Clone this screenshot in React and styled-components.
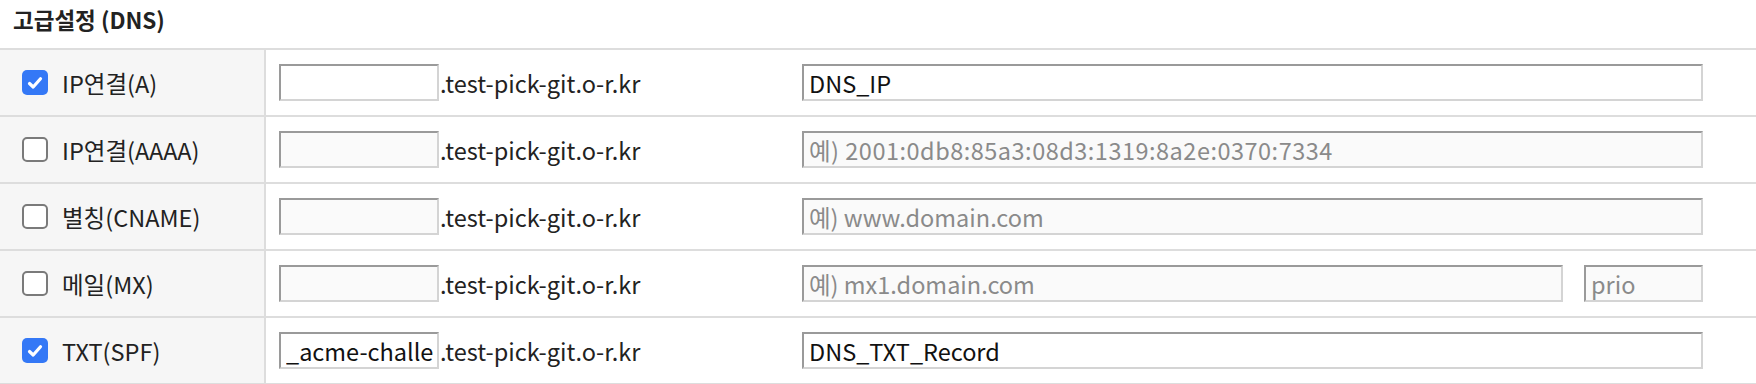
import React from "react"
import styled, { createGlobalStyle } from "styled-components"

const GlobalStyle = createGlobalStyle`
  html, body {
    margin: 0;
    padding: 0;
    background: #fff;
  }
  body {
    font-family: "Noto Sans CJK KR", "Noto Sans", sans-serif;
    color: #222;
  }
`

const Section = styled.section`
  width: 1756px;
`

const Title = styled.h3`
  margin: 0;
  height: 48px;
  padding: 4px 0 0 13px;
  box-sizing: border-box;
  font-size: 22.5px;
  font-weight: 700;
  line-height: 30px;
  color: #222;
`

const Table = styled.div`
  border-top: 2px solid #dddddd;
`

const Row = styled.div`
  display: grid;
  grid-template-columns: 266px 1fr;
  height: 67px;
  box-sizing: border-box;
  border-bottom: 2px solid #dddddd;
`

const Head = styled.label`
  display: flex;
  align-items: center;
  gap: 14px;
  padding-left: 22px;
  background: #f6f6f6;
  border-right: 2px solid #dddddd;
  font-size: 23.5px;
  color: #222;
`

const Box = styled.span`
  width: 26px;
  height: 25px;
  flex: none;
  box-sizing: border-box;
  border-radius: 5px;
  display: flex;
  align-items: center;
  justify-content: center;
  background: ${p => (p.checked ? "#3478f6" : "#fff")};
  border: ${p => (p.checked ? "none" : "2px solid #7a7a7a")};
`

const Cell = styled.div`
  display: flex;
  align-items: center;
  padding: 0 53px 0 13px;
`

const Domain = styled.div`
  display: flex;
  align-items: center;
  width: 523px;
  flex: none;
`

const Suffix = styled.span`
  font-size: 23.5px;
  color: #222;
  margin-left: 1px;
`

const Values = styled.div`
  display: flex;
  flex: 1;
  gap: 21px;
`

const Input = styled.input`
  box-sizing: border-box;
  height: 37px;
  width: ${p => p.w || "100%"};
  flex: ${p => (p.w ? "none" : "1")};
  padding: 0 2px 0 5px;
  font-family: "Noto Sans CJK KR", "Noto Sans", sans-serif;
  font-size: 23.5px;
  color: #111;
  background: ${p => (p.disabled ? "#fafafa" : "#fff")};
  border-style: solid;
  border-width: 2px;
  border-color: #9a9a9a #d4d4d4 #d4d4d4 #9a9a9a;
  border-radius: 0;
  outline: none;
  &::placeholder {
    color: #8a8a8a;
    letter-spacing: ${p => p.spacing || "0"};
  }
  &:disabled {
    color: #8a8a8a;
  }
`

const Check = ({ checked }) => (
  <Box checked={checked}>
    {checked && (
      <svg width="18" height="18" viewBox="0 0 18 18">
        <path
          d="M3.5 9.5 L7.2 13 L14.5 4.8"
          fill="none"
          stroke="#fff"
          strokeWidth="3.2"
          strokeLinecap="round"
          strokeLinejoin="round"
        />
      </svg>
    )}
  </Box>
)

const ROWS = [
  { label: "IP연결(A)", checked: true, host: "", value: "DNS_IP", ph: "" },
  {
    label: "IP연결(AAAA)",
    checked: false,
    host: "",
    value: "",
    ph: "예) 2001:0db8:85a3:08d3:1319:8a2e:0370:7334",
    spacing: "0.5px",
  },
  { label: "별칭(CNAME)", checked: false, host: "", value: "", ph: "예) www.domain.com" },
  { label: "메일(MX)", checked: false, host: "", value: "", ph: "예) mx1.domain.com", prio: true },
  { label: "TXT(SPF)", checked: true, host: "_acme-challenge", value: "DNS_TXT_Record", ph: "" },
]

const App = () => (
  <>
    <GlobalStyle />
    <Section>
      <Title>고급설정 (DNS)</Title>
      <Table>
        {ROWS.map(row => (
          <Row key={row.label}>
            <Head>
              <Check checked={row.checked} />
              {row.label}
            </Head>
            <Cell>
              <Domain>
                <Input
                  w="160px"
                  disabled={!row.checked}
                  defaultValue={row.host}
                />
                <Suffix>.test-pick-git.o-r.kr</Suffix>
              </Domain>
              <Values>
                <Input
                  disabled={!row.checked}
                  defaultValue={row.value}
                  placeholder={row.ph}
                  spacing={row.spacing}
                />
                {row.prio && (
                  <Input w="119px" disabled={!row.checked} placeholder="prio" />
                )}
              </Values>
            </Cell>
          </Row>
        ))}
      </Table>
    </Section>
  </>
)

export default App
